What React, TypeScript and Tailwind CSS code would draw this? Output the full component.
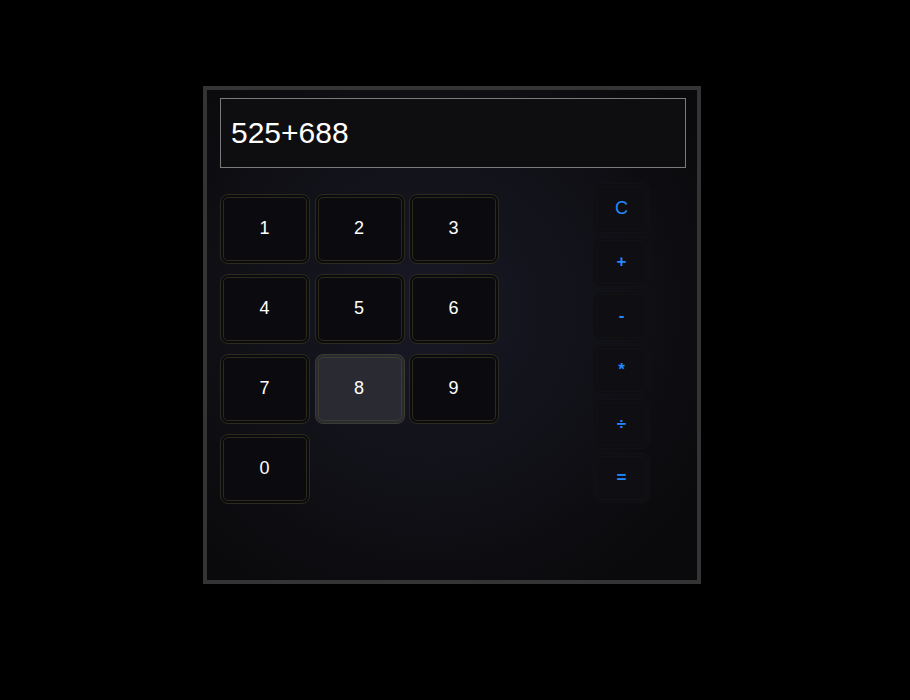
import React from 'react';

const digits = ['1', '2', '3', '4', '5', '6', '7', '8', '9', '0'];
const ops = ['C', '+', '-', '*', '÷', '='];

export default function App() {
  return (
    <div className="w-full h-screen bg-black pt-[86px] pl-[203px] font-['Liberation_Sans',Arial,sans-serif]">
      <div className="w-[498px] h-[498px] border-4 border-[#343434] bg-[radial-gradient(circle_at_45%_45%,#191927_0%,#111118_45%,#0a0a0c_85%)] pt-[8px] pl-[13px]">
        {/* Display */}
        <div className="w-[466px] h-[70px] border border-[#7a7a7a] bg-[#0e0e11] flex items-center pl-[10px] pb-[2px] text-[30px] text-white">
          525+688
        </div>

        <div className="flex mt-[15px]">
          {/* Number pad */}
          <div className="grid grid-cols-[90px_90px_90px] gap-x-[4.5px] gap-y-[10px] mt-[11px] h-fit">
            {digits.map((d) => (
              <button
                key={d}
                className={
                  d === '8'
                    ? 'h-[70px] rounded-[8px] border-4 border-double border-[#3b3b30] bg-[#2a2a33] text-white text-[18px] pb-[2px] pr-[1px]'
                    : 'h-[70px] rounded-[8px] border-4 border-double border-[#2c2b1b] bg-[#0b0b0f] text-white text-[18px] pb-[2px] pr-[1px]'
                }
              >
                {d}
              </button>
            ))}
          </div>

          {/* Operators */}
          <div className="flex flex-col gap-[4px] ml-[94px]">
            {ops.map((o) => (
              <button
                key={o}
                className={
                  o === 'C'
                    ? 'w-[57px] h-[50px] rounded-[8px] border-4 border-double border-[#121214] bg-[#0f0f13] text-[#2389ff] text-[18px]'
                    : 'w-[57px] h-[50px] rounded-[8px] border-4 border-double border-[#121214] bg-[#0f0f13] text-[#2389ff] text-[17px] font-bold'
                }
              >
                {o}
              </button>
            ))}
          </div>
        </div>
      </div>
    </div>
  );
}
